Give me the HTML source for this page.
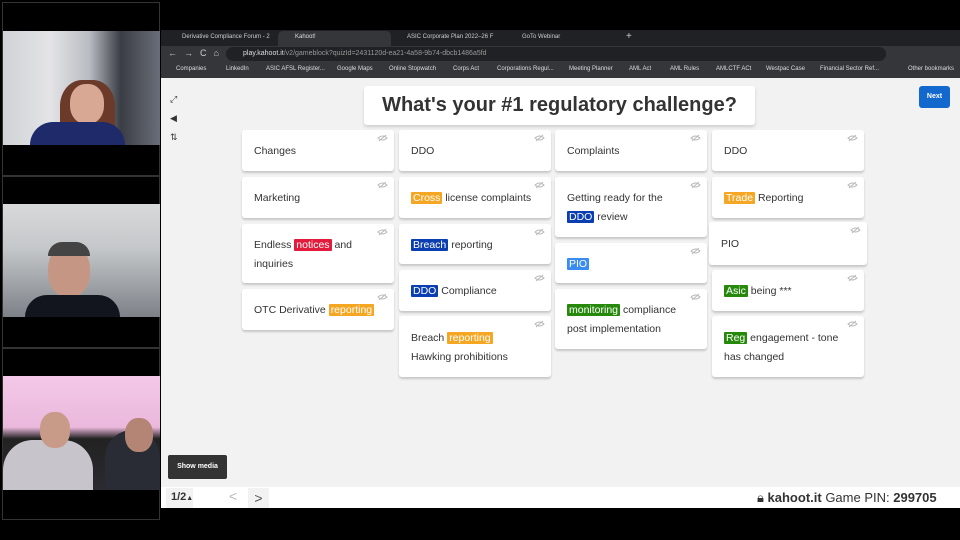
<!DOCTYPE html><html><head><style>
*{margin:0;padding:0;box-sizing:border-box}
body{width:960px;height:540px;background:#000;position:relative;overflow:hidden;font-family:"Liberation Sans",sans-serif}
.a{position:absolute}
.vid{position:absolute;left:2px;width:158px;border:1px solid #333}
.card{position:absolute;background:#fff;border-radius:3px;box-shadow:0 2px 2px rgba(0,0,0,.18);font-size:10.5px;color:#333;padding:2px 12px 0;line-height:19px;display:flex;align-items:center}
.card span.t{display:block}
.h{color:#fff;padding:0 2px;border-radius:1px}
.o{background:#f5a623}.r{background:#e21b3c}.b{background:#0b3eb0}.g{background:#26890c}.lb{background:#3a8cf0}
.eye{position:absolute;right:6px;top:4px;width:11px;height:8px}
.bm{color:#ddd;font-size:6px;position:absolute;top:66px}
</style></head><body>
<div class="vid" style="top:2px;height:174px"></div>
<div class="a" style="left:3px;top:31px;width:157px;height:114px;background:linear-gradient(90deg,#cfd2d6 0,#e4e4e6 30%,#b9bcc2 55%,#3a3d44 75%,#6a6e78 100%)"></div>
<div class="a" style="left:60px;top:80px;width:55px;height:65px;background:#6b3a28;border-radius:40% 40% 0 0"></div>
<div class="a" style="left:70px;top:84px;width:34px;height:40px;background:#d8a894;border-radius:45%"></div>
<div class="a" style="left:30px;top:122px;width:95px;height:23px;background:#1e2a6a;border-radius:30px 30px 0 0"></div>
<div class="vid" style="top:176px;height:172px"></div>
<div class="a" style="left:3px;top:204px;width:157px;height:113px;background:linear-gradient(180deg,#d8d9da 0,#c4c7c9 40%,#7d8188 100%)"></div>
<div class="a" style="left:48px;top:245px;width:42px;height:52px;background:#c69684;border-radius:45%"></div>
<div class="a" style="left:48px;top:242px;width:42px;height:14px;background:#444;border-radius:20px 20px 0 0"></div>
<div class="a" style="left:25px;top:295px;width:95px;height:22px;background:#12151d;border-radius:30px 30px 0 0"></div>
<div class="vid" style="top:348px;height:172px"></div>
<div class="a" style="left:3px;top:376px;width:157px;height:114px;background:linear-gradient(180deg,#f4c8e8 0,#eab8dc 45%,#222 55%,#2a2a30 100%)"></div>
<div class="a" style="left:3px;top:440px;width:90px;height:50px;background:#c8c4cc;border-radius:30px 30px 0 0"></div>
<div class="a" style="left:40px;top:412px;width:30px;height:36px;background:#c89a88;border-radius:45%"></div>
<div class="a" style="left:105px;top:430px;width:55px;height:60px;background:#2a2c35;border-radius:30px 30px 0 0"></div>
<div class="a" style="left:125px;top:418px;width:28px;height:34px;background:#b48574;border-radius:45%"></div>
<div class="a" style="left:161px;top:30px;width:799px;height:16px;background:#202124"></div>
<div class="a" style="left:278px;top:31px;width:113px;height:15px;background:#35363a;border-radius:5px 5px 0 0"></div>
<div class="a" style="left:182px;top:34px;font-size:6px;color:#ccc">Derivative Compliance Forum - 2</div>
<div class="a" style="left:295px;top:34px;font-size:6px;color:#ddd">Kahoot!</div>
<div class="a" style="left:407px;top:34px;font-size:6px;color:#ccc">ASIC Corporate Plan 2022–26 F</div>
<div class="a" style="left:522px;top:34px;font-size:6px;color:#ccc">GoTo Webinar</div>
<div class="a" style="left:626px;top:31px;font-size:10px;color:#ccc">+</div>
<div class="a" style="left:161px;top:46px;width:799px;height:17px;background:#35363a"></div>
<div class="a" style="left:226px;top:47px;width:660px;height:14px;background:#202124;border-radius:7px"></div>
<div class="a" style="left:243px;top:50px;font-size:7px;color:#ddd">play.kahoot.it<span style="color:#999">/v2/gameblock?quizId=2431120d-ea21-4a58-9b74-dbcb1486a5fd</span></div>
<div class="a" style="left:168px;top:48px;font-size:9px;color:#ccc;letter-spacing:7px">←→C⌂</div>
<div class="a" style="left:161px;top:63px;width:799px;height:15px;background:#35363a"></div>
<div class="bm" style="left:176px">Companies</div><div class="bm" style="left:226px">LinkedIn</div><div class="bm" style="left:266px">ASIC AFSL Register...</div><div class="bm" style="left:337px">Google Maps</div><div class="bm" style="left:389px">Online Stopwatch</div><div class="bm" style="left:453px">Corps Act</div><div class="bm" style="left:497px">Corporations Regul...</div><div class="bm" style="left:569px">Meeting Planner</div><div class="bm" style="left:629px">AML Act</div><div class="bm" style="left:670px">AML Rules</div><div class="bm" style="left:716px">AMLCTF ACt</div><div class="bm" style="left:766px">Westpac Case</div><div class="bm" style="left:820px">Financial Sector Ref...</div><div class="bm" style="left:908px">Other bookmarks</div>
<div class="a" style="left:161px;top:78px;width:799px;height:409px;background:#f2f2f2"></div>
<div class="a" style="left:161px;top:487px;width:799px;height:21px;background:#fff"></div>
<div class="a" style="left:170px;top:90px;font-size:9px;color:#333;line-height:19px">⤢<br>◀<br>⇅</div>
<div class="a" style="left:364px;top:86px;width:391px;height:39px;background:#fff;border-radius:3px;box-shadow:0 2px 3px rgba(0,0,0,.15);font-size:20px;font-weight:bold;color:#333;text-align:center;line-height:39px">What's your #1 regulatory challenge?</div>
<div class="a" style="left:919px;top:86px;width:31px;height:22px;background:#1368ce;border-radius:3px;color:#fff;font-size:7px;font-weight:bold;text-align:center;line-height:22px">Next</div>
<svg width="0" height="0"><defs><g id="e"><path d="M1 4Q5.5 0 10 4Q5.5 8 1 4Z M2 7L9 1" fill="none" stroke="#bbb" stroke-width="1"/></g></defs></svg>

<div class="card" style="left:242px;top:130px;width:152px;height:41px"><span class="t">Changes</span><svg class="eye"><use href="#e"/></svg></div>
<div class="card" style="left:242px;top:177px;width:152px;height:41px"><span class="t">Marketing</span><svg class="eye"><use href="#e"/></svg></div>
<div class="card" style="left:242px;top:224px;width:152px;height:59px"><span class="t">Endless <span class="h r">notices</span> and<br>inquiries</span><svg class="eye"><use href="#e"/></svg></div>
<div class="card" style="left:242px;top:289px;width:152px;height:41px"><span class="t">OTC Derivative <span class="h o">reporting</span></span><svg class="eye"><use href="#e"/></svg></div>

<div class="card" style="left:399px;top:130px;width:152px;height:41px"><span class="t">DDO</span><svg class="eye"><use href="#e"/></svg></div>
<div class="card" style="left:399px;top:177px;width:152px;height:41px"><span class="t"><span class="h o">Cross</span> license complaints</span><svg class="eye"><use href="#e"/></svg></div>
<div class="card" style="left:399px;top:224px;width:152px;height:40px"><span class="t"><span class="h b">Breach</span> reporting</span><svg class="eye"><use href="#e"/></svg></div>
<div class="card" style="left:399px;top:270px;width:152px;height:41px"><span class="t"><span class="h b">DDO</span> Compliance</span><svg class="eye"><use href="#e"/></svg></div>
<div class="card" style="left:399px;top:316px;width:152px;height:61px"><span class="t">Breach <span class="h o">reporting</span><br>Hawking prohibitions</span><svg class="eye"><use href="#e"/></svg></div>

<div class="card" style="left:555px;top:130px;width:152px;height:41px"><span class="t">Complaints</span><svg class="eye"><use href="#e"/></svg></div>
<div class="card" style="left:555px;top:177px;width:152px;height:60px"><span class="t">Getting ready for the<br><span class="h b">DDO</span> review</span><svg class="eye"><use href="#e"/></svg></div>
<div class="card" style="left:555px;top:243px;width:152px;height:40px"><span class="t"><span class="h lb">PIO</span></span><svg class="eye"><use href="#e"/></svg></div>
<div class="card" style="left:555px;top:289px;width:152px;height:60px"><span class="t"><span class="h g">monitoring</span> compliance<br>post implementation</span><svg class="eye"><use href="#e"/></svg></div>

<div class="card" style="left:712px;top:130px;width:152px;height:41px"><span class="t">DDO</span><svg class="eye"><use href="#e"/></svg></div>
<div class="card" style="left:712px;top:177px;width:152px;height:41px"><span class="t"><span class="h o">Trade</span> Reporting</span><svg class="eye"><use href="#e"/></svg></div>
<div class="card" style="left:709px;top:222px;width:158px;height:43px;padding-left:12px"><span class="t">PIO</span><svg class="eye"><use href="#e"/></svg></div>
<div class="card" style="left:712px;top:270px;width:152px;height:41px"><span class="t"><span class="h g">Asic</span> being ***</span><svg class="eye"><use href="#e"/></svg></div>
<div class="card" style="left:712px;top:316px;width:152px;height:61px"><span class="t"><span class="h g">Reg</span> engagement - tone<br>has changed</span><svg class="eye"><use href="#e"/></svg></div>

<div class="a" style="left:168px;top:455px;width:59px;height:24px;background:#333;border-radius:2px;color:#fff;font-size:7px;font-weight:bold;text-align:center;line-height:24px">Show media</div>
<div class="a" style="left:166px;top:488px;width:27px;height:20px;background:#f2f2f2"></div>
<div class="a" style="left:171px;top:491px;font-size:11px;font-weight:bold;color:#333">1/2<span style="font-size:7px">▲</span></div>
<div class="a" style="left:229px;top:488px;font-size:14px;color:#bbb">&lt;</div>
<div class="a" style="left:248px;top:488px;width:21px;height:20px;background:#f2f2f2;font-size:14px;color:#555;text-align:center;line-height:20px">&gt;</div>
<div class="a" style="left:757px;top:490px;font-size:13px;color:#333;white-space:nowrap">🔒︎ <b>kahoot.it</b> Game PIN: <b>299705</b></div>
</body></html>
